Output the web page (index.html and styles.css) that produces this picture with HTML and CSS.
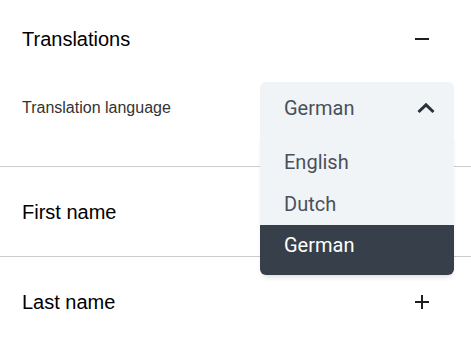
FILE: index.html
```html
<!doctype html>
<html lang="en">
<head>
    <meta charset="UTF-8">
    <meta name="viewport" content="width=device-width, initial-scale=1.0">
    <title>Translations</title>
    <link rel="stylesheet" href="styles.css">
</head>
<body>

<div class="panel">
    <!-- translations -->
    <div class="section">
        <div class="section_head">
            <span class="section_title">Translations</span>
            <span class="toggle">
                <svg width="16" height="16" viewBox="0 0 16 16"><path d="M1 8h14" stroke="#1f1f1f" stroke-width="2"/></svg>
            </span>
        </div>
        <div class="field">
            <span class="field_label">Translation language</span>
            <div class="select open">
                <div class="select_value">
                    <span>German</span>
                    <svg width="20" height="12" viewBox="0 0 20 12"><path d="M2.5 10L10 2.8 17.5 10" fill="none" stroke="#2b313b" stroke-width="3"/></svg>
                </div>
                <ul class="select_list">
                    <li class="select_option">English</li>
                    <li class="select_option">Dutch</li>
                    <li class="select_option selected">German</li>
                </ul>
            </div>
        </div>
    </div>
    <!-- first name -->
    <div class="section closed">
        <div class="section_head">
            <span class="section_title">First name</span>
        </div>
    </div>
    <!-- last name -->
    <div class="section closed">
        <div class="section_head">
            <span class="section_title">Last name</span>
            <span class="toggle">
                <svg width="16" height="16" viewBox="0 0 16 16"><path d="M1 8h14M8 1v14" stroke="#1f1f1f" stroke-width="2"/></svg>
            </span>
        </div>
    </div>
</div>

</body>
</html>
```

FILE: styles.css
```css
body {
    margin: 0;
    background: #fff;
    font-family: "Liberation Sans", Arial, sans-serif;
}

.section {
    padding: 27px 17px 32px 22px;
    border-bottom: 1px solid #cccccc;
}
.section.closed {
    padding-top: 33px;
    padding-bottom: 32px;
}
.section:last-child {
    border-bottom: none;
}

.section_head {
    display: flex;
    align-items: center;
    justify-content: space-between;
    height: 24px;
}
.section_title {
    font-size: 20px;
    color: #000;
}
.toggle {
    display: flex;
    align-items: center;
    justify-content: center;
    width: 24px;
    height: 24px;
    margin-right: 20px;
}

.field {
    display: flex;
    align-items: center;
    justify-content: space-between;
    margin-top: 31px;
}
.field_label {
    font-size: 16px;
    color: #333;
}

.select {
    position: relative;
    width: 194px;
    font-family: Roboto, "Noto Sans", sans-serif;
    font-size: 20px;
    color: #4a505a;
}
.select_value {
    display: flex;
    align-items: center;
    justify-content: space-between;
    height: 52px;
    padding: 0 18px 0 24px;
    background: #f1f4f7;
    border-radius: 6px;
}
.select.open .select_value {
    border-radius: 6px 6px 0 0;
}
.select_list {
    position: absolute;
    top: 52px;
    left: 0;
    right: 0;
    margin: 0;
    padding: 0;
    list-style: none;
    background: #f1f4f7;
    border-radius: 0 0 6px 6px;
    box-shadow: 0 4px 6px -3px rgba(0, 0, 0, 0.18);
    overflow: hidden;
    z-index: 2;
}
.select_option {
    height: 42px;
    line-height: 42px;
    padding: 0 24px;
}
.select_option:first-child {
    margin-top: 7px;
}
.select_option.selected {
    background: #373f4b;
    color: #fff;
    height: 50px;
    line-height: 40px;
}
```
